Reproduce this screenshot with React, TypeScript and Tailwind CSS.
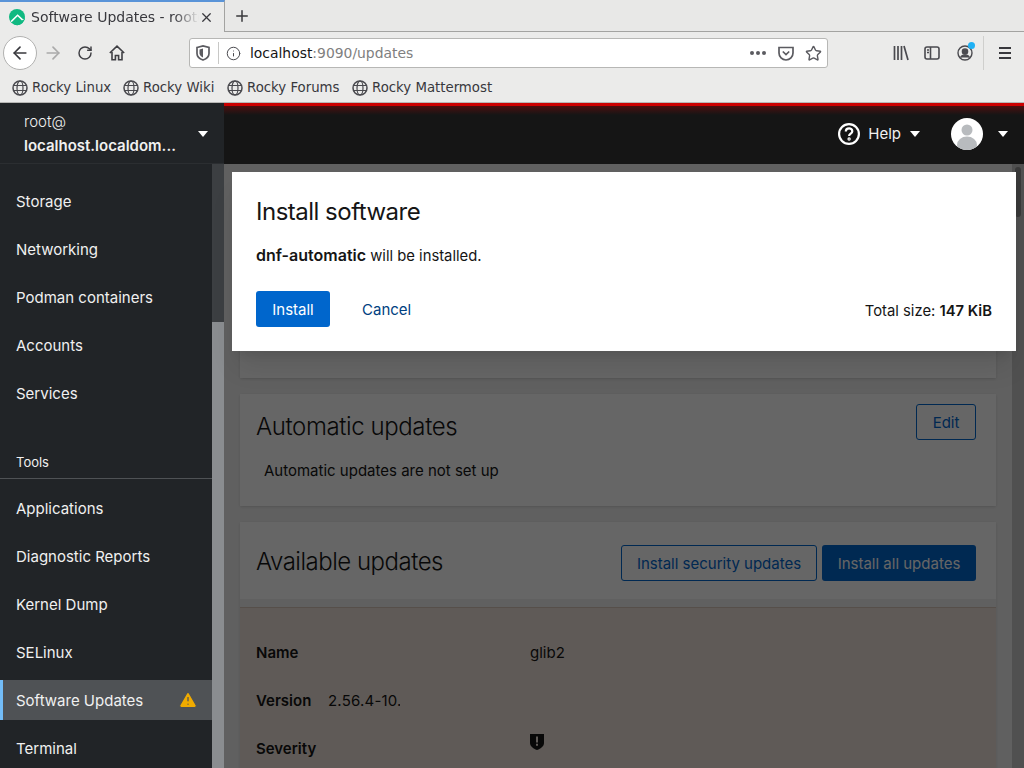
import type { ReactNode } from "react";
import { RotateCw, X, Plus, ArrowLeft, ArrowRight, Star, Info, TriangleAlert } from "lucide-react";

const PF_FONT = "font-['Inter','Noto_Sans',sans-serif]";
const CHROME_FONT = "font-['DejaVu_Sans',sans-serif]";

const bookmarks = [
  { label: "Rocky Linux", width: "w-[111px]" },
  { label: "Rocky Wiki", width: "w-[104px]" },
  { label: "Rocky Forums", width: "w-[125px]" },
  { label: "Rocky Mattermost", width: "w-[152px]" },
];

const topItems = ["Storage", "Networking", "Podman containers", "Accounts", "Services"];
const toolItems = ["Applications", "Diagnostic Reports", "Kernel Dump", "SELinux", "Software Updates", "Terminal"];

function Globe() {
  return (
    <svg width="16" height="16" viewBox="0 0 16 16" fill="none" stroke="#4a4a4f" strokeWidth="1.5" className="shrink-0">
      <circle cx="8" cy="8" r="7" />
      <ellipse cx="8" cy="8" rx="3" ry="7" strokeWidth="1.2" />
      <path d="M1.5 5.5h13M1.5 10.5h13" strokeWidth="1.2" />
    </svg>
  );
}

function Caret({ className = "" }: { className?: string }) {
  return (
    <svg width="10" height="6" viewBox="0 0 10 6" className={className}>
      <path d="M0 0h10L5 6z" fill="#fff" />
    </svg>
  );
}

function TabStrip() {
  return (
    <div className="flex h-8 bg-[#e8e8e7]">
      <div className="flex h-8 w-[225px] shrink-0 items-center border-t-2 border-r border-t-[#5a94d8] border-r-[#a3a3a1] bg-[#ebebea] pl-2">
        <svg width="18" height="18" viewBox="0 0 18 18" className="shrink-0">
          <circle cx="9" cy="9" r="8" fill="#10b981" />
          <path d="M2.5 13.5 9.500 6.500 13 10l1.800-1.800L17 11l-3 4.500-5 2z" fill="#10b981" />
          <path d="M3.600 14.200 9.600 8.200 14 12.600 15.700 11 16.400 12.400 9.600 6.200 2.600 13z" fill="#fff" />
          <path d="M6 16.500 9.500 13l3.200 3.200A8 8 0 0 1 9 17a8 8 0 0 1-3-.5z" fill="#10b981" />
        </svg>
        <span
          className={`ml-[5px] w-[168px] overflow-hidden whitespace-nowrap text-[14px] text-[#38383d] [mask-image:linear-gradient(to_right,black_85%,transparent)] ${CHROME_FONT}`}
        >
          Software Updates - root@localhost
        </span>
        <X size={15} strokeWidth={2} className="text-[#38383d]" />
      </div>
      <div className="flex flex-1 items-center border-b border-[#a3a3a1] pl-2">
        <Plus size={18} strokeWidth={2} className="text-[#38383d]" />
      </div>
    </div>
  );
}

function NavBar() {
  return (
    <div className="flex h-10 items-center bg-[#ebebea] pl-[3px]">
      <div className="flex h-[34px] w-[34px] items-center justify-center rounded-full border border-[#b1b1b0] bg-white">
        <ArrowLeft size={20} strokeWidth={2} className="text-[#38383d]" />
      </div>
      <ArrowRight size={20} strokeWidth={2} className="ml-[6px] text-[#aaaaaa]" />
      <RotateCw size={16} strokeWidth={2.2} className="ml-[14px] text-[#3f3f44]" />
      <svg width="16" height="16" viewBox="0 0 16 16" className="ml-4" fill="none" stroke="#3f3f44" strokeWidth="1.6">
        <path d="M.8 8 8 1.200 15.200 8M3 7v7.800h3.400V10.500h3.200v4.300H13V7" />
      </svg>
      <div className="ml-[64px] flex h-[30px] w-[639px] items-center rounded-[3px] border border-[#b7b7b5] bg-white pl-[6px]">
        <svg width="14" height="16" viewBox="0 0 14 16" fill="none" stroke="#5b5b60" strokeWidth="1.7">
          <path d="M1 2.500 7 1l6 1.500v6c0 3-3 5.500-6 6.500-3-1-6-3.500-6-6.500z" />
          <path d="M7 3.500v9c-2-.8-3.500-2.500-3.500-4.200V4.400z" fill="#5b5b60" stroke="none" />
        </svg>
        <div className="ml-2 h-[22px] w-px bg-[#c8c8c6]" />
        <Info size={15} strokeWidth={1.6} className="ml-[7px] text-[#4a4a4f]" />
        <span className={`ml-[9px] flex-1 text-[13.900px] text-[#808080] ${CHROME_FONT}`}>
          <span className="text-[#151515]">localhost</span>:9090/updates
        </span>
        <div className="flex gap-[2px]">
          <div className="h-[4px] w-[4px] rounded-full bg-[#5b5b60]" />
          <div className="h-[4px] w-[4px] rounded-full bg-[#5b5b60]" />
          <div className="h-[4px] w-[4px] rounded-full bg-[#5b5b60]" />
        </div>
        <svg width="16" height="15" viewBox="0 0 16 15" fill="none" stroke="#5b5b60" strokeWidth="1.700" className="ml-3">
          <path d="M1 1.500h14v5.500a7 7 0 0 1-14 0z" />
          <path d="M4.800 5.500 8 8.500l3.200-3" />
        </svg>
        <Star size={17} strokeWidth={2} className="mr-[5px] ml-[11px] text-[#5b5b60]" />
      </div>
      <svg width="16" height="16" viewBox="0 0 16 16" fill="none" stroke="#4a4a4f" strokeWidth="1.7" className="ml-[65px]">
        <path d="M1.500 1v14M5 1v14M8.500 1v14M11 1l4 14" />
      </svg>
      <svg width="16" height="14" viewBox="0 0 16 14" fill="none" stroke="#4a4a4f" strokeWidth="1.6" className="ml-[15px]">
        <rect x="1" y="1" width="14" height="12" rx="2" />
        <path d="M6.500 1v12M3 4h2M3 6.500h2" />
      </svg>
      <div className="relative ml-[17px]">
        <svg width="16" height="16" viewBox="0 0 16 16" fill="none" stroke="#4a4a4f" strokeWidth="1.400" className="block">
          <circle cx="8" cy="8" r="7" />
          <circle cx="8" cy="6.500" r="2.600" fill="#4a4a4f" />
          <path d="M3.500 12.500c1-2 2.500-2.600 4.500-2.600s3.500.6 4.500 2.600" fill="#4a4a4f" />
        </svg>
        <div className="absolute -top-[3px] -right-[2px] h-[7px] w-[7px] rounded-full bg-[#1fb1f5]" />
      </div>
      <div className="ml-[10px] h-[34px] w-px bg-[#cfcfcd]" />
      <div className="ml-[15px] flex w-3 flex-col gap-[3px]">
        <div className="h-[2px] bg-[#38383d]" />
        <div className="h-[2px] bg-[#38383d]" />
        <div className="h-[2px] bg-[#38383d]" />
      </div>
    </div>
  );
}

function Bookmarks() {
  return (
    <div className={`flex h-[30px] items-center border-b border-[#b7b7b5] bg-[#ebebea] pl-3 text-[13.300px] text-[#38383d] ${CHROME_FONT}`}>
      {bookmarks.map((b) => (
        <div key={b.label} className={`flex items-center gap-1 ${b.width}`}>
          <Globe />
          <span className="whitespace-nowrap">{b.label}</span>
        </div>
      ))}
    </div>
  );
}

function NavItem({ label, active }: { label: string; active?: boolean }) {
  return (
    <div
      className={`mt-2 flex h-10 shrink-0 items-center justify-between pt-[2px] pr-4 text-[15px] text-[#f0f0f0] ${
        active ? "border-l-[3px] border-[#73bcf7] bg-[#4f5255] pl-[13px]" : "pl-4"
      }`}
    >
      {label}
      {active && <TriangleAlert size={20} fill="#f0ab00" strokeWidth={1.5} className="-mr-[2px] -mt-[2px] text-[#4f5255]" />}
    </div>
  );
}

function Sidebar() {
  return (
    <aside className={`flex h-full w-[224px] shrink-0 flex-col bg-[#212427] ${PF_FONT}`}>
      <div className="flex h-[61px] shrink-0 items-center justify-between border-b border-[#2b2e31] pt-px pr-4 pl-6 text-[15px] text-[#f0f0f0]">
        <div className="leading-6">
          <div className="font-light">root@</div>
          <div className="font-semibold">localhost.localdom...</div>
        </div>
        <Caret />
      </div>
      <div className="flex min-h-0 flex-1">
        <nav className="flex w-[212px] flex-col overflow-hidden pt-[9px]">
          {topItems.map((item) => (
            <NavItem key={item} label={item} />
          ))}
          <div className="mt-[39px] mb-px h-[27px] shrink-0 border-b border-[#4f5255] pl-4 text-[13px] leading-[20px] text-[#f0f0f0]">
            Tools
          </div>
          {toolItems.map((item) => (
            <NavItem key={item} label={item} active={item === "Software Updates"} />
          ))}
        </nav>
        <div className="flex w-3 flex-col bg-[#3c3f42] pt-[158px]">
          <div className="flex-1 bg-[#8a8d90]" />
        </div>
      </div>
    </aside>
  );
}

function TopBar() {
  return (
    <header className={`relative flex h-[61px] shrink-0 items-center justify-end bg-[#151515] pr-4 text-[#f0f0f0] ${PF_FONT}`}>
      <div className="absolute inset-x-0 top-0 h-[12px] bg-gradient-to-b from-[#c00]/40 to-transparent" />
      <div className="absolute inset-x-0 top-0 h-[3px] bg-[#c00]" />
      <svg width="22" height="22" viewBox="0 0 22 22" fill="none" stroke="#fff" strokeWidth="2.200">
        <circle cx="11" cy="11" r="9.900" />
        <path d="M7.800 8.600c0-2 1.500-3.200 3.300-3.200s3.200 1.100 3.200 2.800c0 2.300-3.200 2.500-3.200 4.800" />
        <circle cx="11.100" cy="16" r="0.600" />
      </svg>
      <span className="ml-2 pt-[2px] text-[15px]">Help</span>
      <Caret className="ml-[9px]" />
      <div className="ml-[31px] h-8 w-8 overflow-hidden rounded-full bg-white">
        <svg width="32" height="32" viewBox="0 0 32 32">
          <circle cx="16" cy="12" r="5.500" fill="#b8bbbe" />
          <ellipse cx="16" cy="27" rx="10" ry="8.500" fill="#b8bbbe" />
        </svg>
      </div>
      <Caret className="ml-[15px]" />
    </header>
  );
}

function OutlineButton({ children, width }: { children: ReactNode; width: string }) {
  return (
    <button type="button" className={`h-9 rounded-[3px] border border-[#06c] pt-[2px] text-[15px] text-[#06c] ${width}`}>
      {children}
    </button>
  );
}

function Row({ children }: { children: ReactNode }) {
  return <div className="flex h-12 shrink-0 items-center">{children}</div>;
}

function PageContent() {
  return (
    <div className={`flex min-h-0 flex-1 bg-[#f0f0f0] ${PF_FONT}`}>
      <div className="flex min-w-0 flex-1 flex-col gap-4 overflow-hidden px-4 pt-4 text-[#151515]">
        <section className="h-[198px] shrink-0 bg-white shadow-sm" />
        <section className="relative h-[112px] shrink-0 bg-white px-4 shadow-sm">
          <div className="flex items-start justify-between pt-[10px] pr-1">
            <h2 className="pt-[7px] text-[24px] leading-8 font-light tracking-[-0.4px]">Automatic updates</h2>
            <OutlineButton width="w-[60px]">Edit</OutlineButton>
          </div>
          <p className="mt-[17px] pl-2 text-[15px]">Automatic updates are not set up</p>
        </section>
        <section className="flex flex-1 flex-col bg-white shadow-sm">
          <div className="flex h-[77px] shrink-0 items-start justify-between pt-[23px] pr-5 pl-4">
            <h2 className="pt-px text-[24px] leading-8 font-light tracking-[-0.5px]">Available updates</h2>
            <div className="flex gap-[5px]">
              <OutlineButton width="w-[196px]">Install security updates</OutlineButton>
              <button type="button" className="h-9 w-[154px] rounded-[3px] bg-[#06c] pt-[2px] text-[15px] text-white">
                Install all updates
              </button>
            </div>
          </div>
          <div className="h-2 shrink-0 bg-[#f0f0f0]" />
          <div className="flex-1 border-t border-[#d6c6ba] bg-[#eee2d9] px-4 pt-[21px] text-[15px]">
            <Row>
              <span className="w-[274px] font-semibold">Name</span>
              glib2
            </Row>
            <Row>
              <span className="w-[72px] font-semibold">Version</span>
              <span className="w-[72px] overflow-hidden tracking-[0.2px] whitespace-nowrap">2.56.4-10.el8_4.1</span>
            </Row>
            <Row>
              <span className="w-[274px] font-semibold">Severity</span>
              <svg width="14" height="17" viewBox="0 0 14 17" className="-mt-[16px]">
                <path d="M0 1h14v9c0 3-3 5.500-7 7-4-1.500-7-4-7-7z" fill="#151515" />
                <path d="M6 3.500h2v6H6zM6 10.800h2v2H6z" fill="#eee2d9" />
              </svg>
            </Row>
          </div>
        </section>
      </div>
      <div className="w-3 shrink-0 bg-[#c8c9c8] pt-[3px] pl-[3px]">
        <div className="h-[50px] w-[6px] rounded-full bg-[#909090]" />
      </div>
    </div>
  );
}

function InstallModal() {
  return (
    <div className={`absolute top-2 left-2 w-[784px] bg-white px-6 pt-[25px] pb-6 text-[#151515] shadow-xl ${PF_FONT}`}>
      <h1 className="text-[24px] leading-[30px] font-normal tracking-[-0.5px]">Install software</h1>
      <p className="mt-4 text-[14.800px] leading-6">
        <span className="text-[16px] font-semibold">dnf-automatic</span> will be installed.
      </p>
      <div className="mt-[23px] flex items-center justify-between">
        <div className="flex items-center">
          <button type="button" className="h-9 w-[74px] rounded-[3px] bg-[#06c] pt-[2px] text-[15px] text-white">
            Install
          </button>
          <button type="button" className="ml-8 pt-[2px] text-[15px] text-[#004080]">
            Cancel
          </button>
        </div>
        <span className="pt-1 text-[14.800px]">
          Total size: <span className="font-semibold">147 KiB</span>
        </span>
      </div>
    </div>
  );
}

export default function App() {
  return (
    <div className="flex h-[768px] w-[1024px] flex-col overflow-hidden">
      <div className="shrink-0">
        <TabStrip />
        <div className="h-px bg-[#ebebea]" />
        <NavBar />
        <Bookmarks />
      </div>
      <div className="flex min-h-0 flex-1">
        <Sidebar />
        <main className="flex min-w-0 flex-1 flex-col">
          <TopBar />
          <div className="relative flex min-h-0 flex-1">
            <PageContent />
            <div className="absolute inset-0 bg-black/60" />
            <InstallModal />
          </div>
        </main>
      </div>
    </div>
  );
}
